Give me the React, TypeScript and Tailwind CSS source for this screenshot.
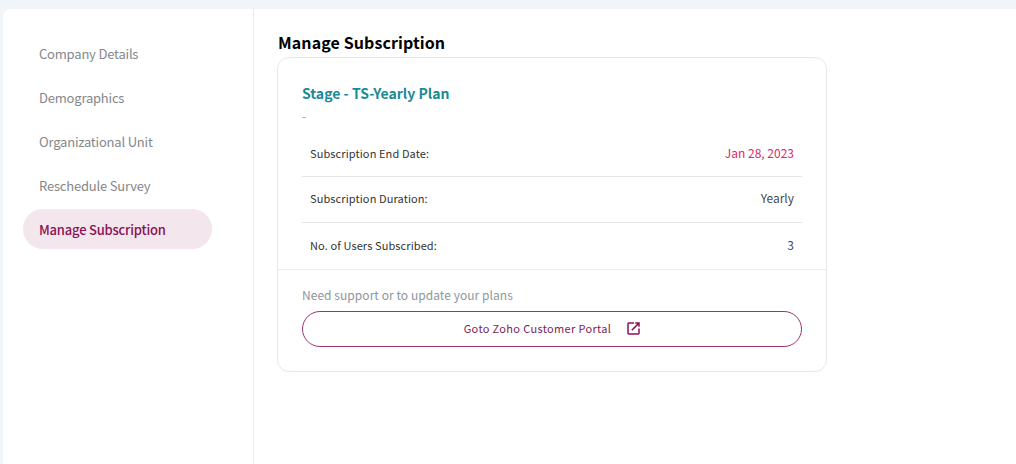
import React from "react";

const nav = ["Company Details", "Demographics", "Organizational Unit", "Reschedule Survey"];

function Row({ label, value, valueClass, h, border }: { label: string; value: string; valueClass: string; h: string; border?: boolean }) {
  return (
    <div className={`flex items-center justify-between px-2 ${h} ${border ? "border-b border-[#e5e7eb]" : ""}`}>
      <span className="text-[11px] leading-4 tracking-[0.1px] text-[#333333]">{label}</span>
      <span className={`text-[12px] leading-4 ${valueClass}`}>{value}</span>
    </div>
  );
}

export default function App() {
  return (
    <div className="h-[464px] w-[1016px] overflow-hidden bg-[#f1f5f9] pl-[3px] pt-[9px] font-['Noto_Sans_CJK_SC',sans-serif]">
      <div className="flex h-[455px] rounded-tl-lg bg-white">
        <aside className="w-[251px] shrink-0 border-r border-[#e8ebef] pl-5 pt-[23px]">
          {nav.map((n) => (
            <div key={n} className="flex h-[44px] items-center pl-4 text-[13px] leading-5 tracking-[-0.2px] text-[#85878a]">{n}</div>
          ))}
          <div className="mt-[1px] flex h-[40px] w-[189px] items-center rounded-full bg-[#f3e6ed] pl-4 pt-[1px] text-[13px] font-medium leading-5 tracking-[-0.2px] text-[#8a1253]">
            Manage Subscription
          </div>
        </aside>
        <main className="pl-[23px] pt-[23px]">
          <h1 className="pl-px text-[16px] font-bold leading-[20px] tracking-[0.1px] text-black">Manage Subscription</h1>
          <div className="mt-[5px] w-[550px] rounded-xl border border-[#e8e8e8] bg-white">
            <div className="px-6 pt-[25px]">
              <div className="text-[14px] font-bold leading-5 tracking-[0px] text-[#1a8a96]">Stage - TS-Yearly Plan</div>
              <div className="mt-[3px] h-[25px] text-[12px] leading-5 text-[#9aa0a6]">-</div>
              <Row label="Subscription End Date:" value="Jan 28, 2023" valueClass="text-[#e0285f]" h="h-[46px] pb-[2px]" border />
              <Row label="Subscription Duration:" value="Yearly" valueClass="text-[#44494f]" h="h-[46px] pb-[3px]" border />
              <Row label="No. of Users Subscribed:" value="3" valueClass="text-[#44494f]" h="h-[46px] pb-[2px]" />
            </div>
            <div className="border-t border-[#ececec] px-6 pb-6 pt-[17px]">
              <div className="text-[12px] leading-[16px] tracking-[0.05px] text-[#8f959b]">Need support or to update your plans</div>
              <button className="mt-[8px] flex h-[36px] w-full items-center justify-center gap-[16px] rounded-full border border-[#a0336d] pb-[2px] text-[11px] tracking-[0.35px] text-[#7d1d55]">
                Goto Zoho Customer Portal
                <svg width="13" height="13" viewBox="0 0 13 13" fill="none" stroke="#8a1253" strokeWidth="1.5">
                  <path d="M7 1H1.7a.7.7 0 0 0-.7.7v9.6a.7.7 0 0 0 .7.7h9.6a.7.7 0 0 0 .7-.7V6.5" />
                  <path d="M4.8 8.2 11.4 1.6M8.2 1h3.8v3.8" />
                </svg>
              </button>
            </div>
          </div>
        </main>
      </div>
    </div>
  );
}
